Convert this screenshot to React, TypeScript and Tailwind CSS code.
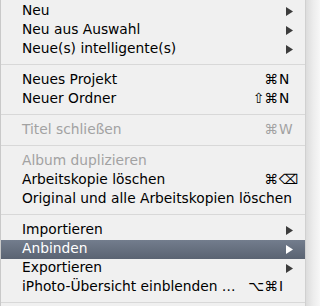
import React from "react";

type Item =
  | { type: "sep" }
  | {
      type: "item";
      label: string;
      mod?: string;
      key?: string;
      submenu?: boolean;
      disabled?: boolean;
      active?: boolean;
    };

const items: Item[] = [
  { type: "item", label: "Neu", submenu: true },
  { type: "item", label: "Neu aus Auswahl", submenu: true },
  { type: "item", label: "Neue(s) intelligente(s)", submenu: true },
  { type: "sep" },
  { type: "item", label: "Neues Projekt", mod: "⌘", key: "N" },
  { type: "item", label: "Neuer Ordner", mod: "⇧⌘", key: "N" },
  { type: "sep" },
  { type: "item", label: "Titel schließen", mod: "⌘", key: "W", disabled: true },
  { type: "sep" },
  { type: "item", label: "Album duplizieren", disabled: true },
  { type: "item", label: "Arbeitskopie löschen", mod: "⌘", key: "⌫" },
  { type: "item", label: "Original und alle Arbeitskopien löschen" },
  { type: "sep" },
  { type: "item", label: "Importieren", submenu: true },
  { type: "item", label: "Anbinden", submenu: true, active: true },
  { type: "item", label: "Exportieren", submenu: true },
  { type: "item", label: "iPhoto-Übersicht einblenden …", mod: "⌥⌘", key: "I" },
  { type: "sep" },
];

function Arrow({ white }: { white?: boolean }) {
  return (
    <svg width="7" height="9" viewBox="0 0 7 9" className="block">
      <path d="M0 0 L7 4.5 L0 9 Z" fill={white ? "#ffffff" : "#3c3c3c"} />
    </svg>
  );
}

export default function App() {
  return (
    <div
      className="flex w-[320px] h-[306px] overflow-hidden bg-[#f6f6f6]"
      style={{ fontFamily: '"DejaVu Sans", "Liberation Sans", sans-serif' }}
    >
      <div className="w-[306px] shrink-0 h-full bg-[#f0f0f0] border-l border-[#c9c9c9] border-r border-r-[#d0d0d0] pt-[1.5px] flex flex-col">
        {items.map((it, i) =>
          it.type === "sep" ? (
            <div key={i} className="h-[12px] shrink-0 flex items-center">
              <div className="w-full h-px bg-[#d8d8d8]" />
            </div>
          ) : (
            <div
              key={i}
              className={
                "h-[19px] shrink-0 flex items-center pl-[21px] text-[13.8px] leading-none " +
                (it.active
                  ? "bg-gradient-to-b from-[#737d8d] to-[#5a6372] text-white"
                  : it.disabled
                  ? "text-[#a2a2a2]"
                  : "text-black")
              }
            >
              <span className="flex-1 whitespace-nowrap">{it.label}</span>
              {it.submenu && (
                <span className="w-[19px] shrink-0 flex justify-start">
                  <Arrow white={it.active} />
                </span>
              )}
              {it.key && (
                <span className="flex shrink-0 w-[60px]">
                  <span className="w-[33px] text-right whitespace-nowrap">{it.mod}</span>
                  <span className="w-[27px] pl-[1px]">{it.key}</span>
                </span>
              )}
            </div>
          )
        )}
      </div>
      <div className="flex-1 h-full bg-gradient-to-r from-[#dcdcdc] via-[#ececec] to-[#f7f7f7]" />
    </div>
  );
}
